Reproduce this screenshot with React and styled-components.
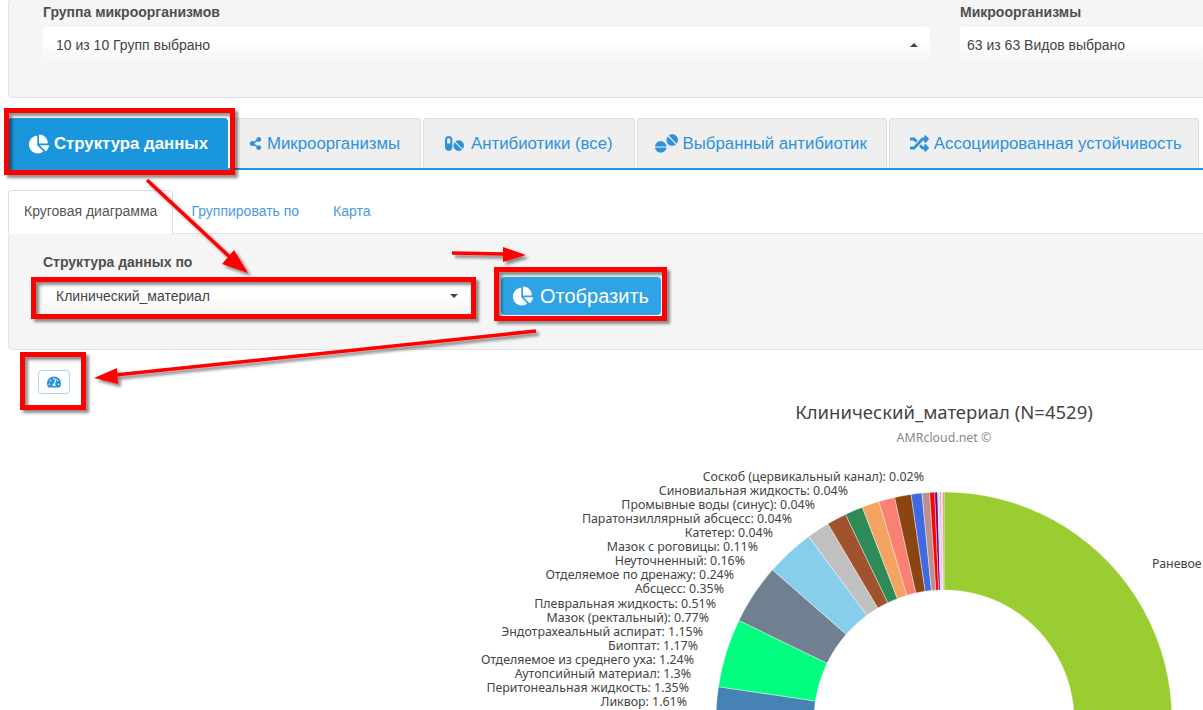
import styled, { createGlobalStyle } from "styled-components";
import {
  FaChartPie,
  FaShareAlt,
  FaPills,
  FaTablets,
  FaRandom,
  FaTachometerAlt,
} from "react-icons/fa";

const GlobalStyle = createGlobalStyle`
  html, body {
    margin: 0;
    height: 710px;
    overflow: hidden;
    background: #fff;
    font-family: "Liberation Sans", Arial, sans-serif;
  }
`;

const Page = styled.div`
  position: relative;
  width: 1203px;
  height: 710px;
  overflow: hidden;
`;

const Content = styled.div`
  width: 1500px;
  padding-left: 8px;
`;

const Well = styled.div`
  background: #f5f5f5;
  border: 1px solid #e3e3e3;
  border-radius: 4px;
  box-sizing: border-box;
`;

const FilterWell = styled(Well)`
  height: 99px;
  margin-top: -1px;
  padding: 4px 0 0 34px;
  display: grid;
  grid-template-columns: 887px 1fr;
  column-gap: 30px;
`;

const Label = styled.div`
  font-size: 14px;
  font-weight: 700;
  line-height: 16px;
  color: #4f4f4f;
  margin-bottom: 7px;
`;

const Select = styled.div`
  height: ${(p) => p.$height}px;
  display: flex;
  align-items: center;
  justify-content: space-between;
  box-sizing: border-box;
  padding: 0 12px 0 ${(p) => p.$indent}px;
  border-radius: 4px;
  background: linear-gradient(#fff 40%, #f5f5f5 100%);
  color: #444;
  font-size: 14px;
`;

const Caret = styled.span`
  width: 0;
  height: 0;
  border-left: 4px solid transparent;
  border-right: 4px solid transparent;
  border-${(p) => (p.$up ? "bottom" : "top")}: 4px solid #444;
`;

const TabBar = styled.div`
  display: flex;
  gap: 2px;
  margin-top: 20px;
  height: 52px;
  box-sizing: border-box;
  border-bottom: 2px solid #1a96dc;
`;

const Tab = styled.div`
  height: 50px;
  box-sizing: border-box;
  padding: 0 ${(p) => p.$right}px 0 ${(p) => p.$left}px;
  display: flex;
  align-items: center;
  gap: ${(p) => p.$gap || 5}px;
  font-size: 16.8px;
  border-radius: 4px 4px 0 0;
  color: ${(p) => (p.$active ? "#fff" : "#2c92dd")};
  font-weight: ${(p) => (p.$active ? 700 : 400)};
  background: ${(p) => (p.$active ? "#1a96dc" : "#efefef")};
  border: 1px solid ${(p) => (p.$active ? "#1a96dc" : "#dedede")};
  border-bottom: none;
`;

const SubTabBar = styled.div`
  display: flex;
  gap: 2px;
  margin-top: 20px;
  height: 44px;
  box-sizing: border-box;
  border-bottom: 1px solid #ddd;
`;

const SubTab = styled.div`
  height: 44px;
  box-sizing: border-box;
  padding: 0 15px 3px;
  display: flex;
  align-items: center;
  font-size: 14px;
  border-radius: 4px 4px 0 0;
  color: ${(p) => (p.$active ? "#555" : "#4a9be0")};
  background: ${(p) => (p.$active ? "#fff" : "transparent")};
  border: 1px solid ${(p) => (p.$active ? "#ddd" : "transparent")};
  border-bottom: none;
`;

const FormWell = styled(Well)`
  height: 117px;
  margin-top: -1px;
  padding: 20px 0 0 34px;
  display: flex;
  align-items: flex-start;
  gap: 31px;
`;

const Field = styled.div`
  width: 427px;
`;

const ShowButton = styled.div`
  width: 160px;
  height: 38px;
  margin-top: 23px;
  display: flex;
  align-items: center;
  justify-content: center;
  gap: 7px;
  background: #2ea3e6;
  color: #fff;
  font-size: 20px;
  border-radius: 4px;
`;

const GaugeButton = styled.div`
  width: 32px;
  height: 24px;
  margin: 20px 0 0 30px;
  display: flex;
  align-items: center;
  justify-content: center;
  box-sizing: border-box;
  border: 1px solid #a8d4fa;
  border-radius: 4px;
  color: #2c92dd;
`;

const Chart = styled.svg`
  display: block;
  text {
    font-family: "Noto Sans", "Open Sans", sans-serif;
  }
`;

const Overlay = styled.svg`
  position: absolute;
  left: 0;
  top: 0;
  pointer-events: none;
`;

const CX = 944;
const CY = 720;
const R = 228;
const r = 130;

const SLICES = [
  ["#9acd32", 0, -230],
  ["#4682b4", 81.6, 110],
  ["#00ff7f", 64.1, 81.6],
  ["#708090", 48.8, 64.1],
  ["#87ceeb", 36.4, 48.8],
  ["#c0c0c0", 30.6, 36.4],
  ["#a0522d", 25.6, 30.6],
  ["#2e8b57", 21, 25.6],
  ["#f4a460", 16.6, 21],
  ["#fa8072", 12.5, 16.6],
  ["#8b4513", 8.3, 12.5],
  ["#4169e1", 5.55, 8.3],
  ["#bc8f8f", 3.6, 5.55],
  ["#ff0000", 2.35, 3.6],
  ["#800080", 1.6, 2.35],
  ["#b0e0e6", 1.1, 1.6],
  ["#dda0dd", 0.65, 1.1],
  ["#ffc0cb", 0.3, 0.65],
  ["#cd853f", 0, 0.3],
];

function point(radius, deg) {
  // angle is counted anticlockwise from the top of the ring
  const a = (deg * Math.PI) / 180;
  return [CX - radius * Math.sin(a), CY - radius * Math.cos(a)];
}

function slicePath(from, to) {
  const [x1, y1] = point(R, from);
  const [x2, y2] = point(R, to);
  const [x3, y3] = point(r, to);
  const [x4, y4] = point(r, from);
  const sweep = to > from ? 0 : 1;
  const back = to > from ? 1 : 0;
  const large = Math.abs(to - from) > 180 ? 1 : 0;
  return `M${x1} ${y1}A${R} ${R} 0 ${large} ${sweep} ${x2} ${y2}L${x3} ${y3}A${r} ${r} 0 ${large} ${back} ${x4} ${y4}Z`;
}

const LABELS = [
  ["Соскоб (цервикальный канал): 0.02%", 924, 481],
  ["Синовиальная жидкость: 0.04%", 848, 495],
  ["Промывные воды (синус): 0.04%", 815, 509],
  ["Паратонзиллярный абсцесс: 0.04%", 792, 523],
  ["Катетер: 0.04%", 773, 537],
  ["Мазок с роговицы: 0.11%", 758, 551],
  ["Неуточненный: 0.16%", 745, 565],
  ["Отделяемое по дренажу: 0.24%", 734, 579],
  ["Абсцесс: 0.35%", 724, 593],
  ["Плевральная жидкость: 0.51%", 716, 608],
  ["Мазок (ректальный): 0.77%", 709, 622],
  ["Эндотрахеальный аспират: 1.15%", 703, 636],
  ["Биоптат: 1.17%", 698, 650],
  ["Отделяемое из среднего уха: 1.24%", 694, 664],
  ["Аутопсийный материал: 1.3%", 691, 678],
  ["Перитонеальная жидкость: 1.35%", 689, 692],
  ["Ликвор: 1.61%", 687, 706],
];

const BOXES = [
  [6.5, 110.5, 226, 62],
  [33.5, 279.5, 440, 37],
  [496.5, 269.5, 168, 49],
  [22.5, 354.5, 61, 53],
];

const ARROWS = [
  { line: "147,180 233,260", head: "248,273 222,264 234,250" },
  { line: "452,253 505,254", head: "526,255 503,247 503,262" },
  { line: "536,331 115,375", head: "94,378 117,368 118,384" },
];

function App() {
  return (
    <Page>
      <GlobalStyle />
      <Content>
        <FilterWell>
          <div>
            <Label>Группа микроорганизмов</Label>
            <Select $height={36} $indent={13}>
              <span>10 из 10 Групп выбрано</span>
              <Caret $up />
            </Select>
          </div>
          <div>
            <Label>Микроорганизмы</Label>
            <Select $height={36} $indent={7}>
              <span>63 из 63 Видов выбрано</span>
            </Select>
          </div>
        </FilterWell>

        <TabBar>
          <Tab $active $left={20} $right={19}>
            <FaChartPie size={20} />
            Структура данных
          </Tab>
          <Tab $left={18} $right={20}>
            <FaShareAlt size={13} />
            Микроорганизмы
          </Tab>
          <Tab $left={21} $right={21} $gap={7}>
            <FaPills size={19} />
            Антибиотики (все)
          </Tab>
          <Tab $left={17} $right={19}>
            <FaTablets size={23} />
            Выбранный антибиотик
          </Tab>
          <Tab $left={20} $right={16}>
            <FaRandom size={19} />
            Ассоциированная устойчивость
          </Tab>
        </TabBar>

        <SubTabBar>
          <SubTab $active>Круговая диаграмма</SubTab>
          <SubTab>Группировать по</SubTab>
          <SubTab>Карта</SubTab>
        </SubTabBar>

        <FormWell>
          <Field>
            <Label>Структура данных по</Label>
            <Select $height={38} $indent={13}>
              <span>Клинический_материал</span>
              <Caret />
            </Select>
          </Field>
          <ShowButton>
            <FaChartPie size={20} />
            Отобразить
          </ShowButton>
        </FormWell>

        <GaugeButton>
          <FaTachometerAlt size={14} />
        </GaugeButton>
      </Content>

      <Chart width="1203" height="316" viewBox="0 394 1203 316">
        <text x="944" y="419" textAnchor="middle" fontSize="18.5" fill="#444">
          Клинический_материал (N=4529)
        </text>
        <text x="944" y="442" textAnchor="middle" fontSize="12.4" fill="#888">
          AMRcloud.net ©
        </text>
        {SLICES.map(([colour, from, to]) => (
          <path
            key={colour}
            d={slicePath(from, to)}
            fill={colour}
            stroke="#fff"
            strokeWidth="0.4"
          />
        ))}
        {LABELS.map(([label, x, y]) => (
          <text key={label} x={x} y={y} textAnchor="end" fontSize="12.4" fill="#444">
            {label}
          </text>
        ))}
        <text x="1152" y="568" fontSize="12.4" fill="#444">
          Раневое
        </text>
      </Chart>

      <Overlay width="1203" height="710" viewBox="0 0 1203 710">
        <defs>
          <filter id="markShadow" x="-10%" y="-10%" width="120%" height="120%">
            <feDropShadow dx="3" dy="3" stdDeviation="1.5" floodColor="#000" floodOpacity="0.45" />
          </filter>
        </defs>
        <g filter="url(#markShadow)">
          {BOXES.map(([x, y, w, h]) => (
            <rect key={x} x={x} y={y} width={w} height={h} fill="none" stroke="#f00" strokeWidth="5" />
          ))}
          {ARROWS.map((arrow) => (
            <g key={arrow.head}>
              <polyline points={arrow.line} fill="none" stroke="#f00" strokeWidth="3.5" />
              <polygon points={arrow.head} fill="#f00" />
            </g>
          ))}
        </g>
      </Overlay>
    </Page>
  );
}

export default App;
